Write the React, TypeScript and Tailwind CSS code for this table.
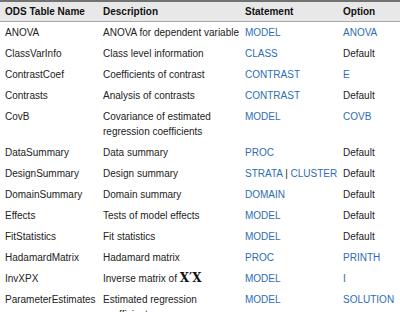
import React from "react";

type Row = { name: string; desc: React.ReactNode; stmt: React.ReactNode; opt: string; optBlue: boolean };

const B = ({ children }: { children: React.ReactNode }) => (
  <span className="text-[#2d6db5]">{children}</span>
);

const rows: Row[] = [
  { name: "ANOVA", desc: "ANOVA for dependent variable", stmt: <B>MODEL</B>, opt: "ANOVA", optBlue: true },
  { name: "ClassVarInfo", desc: "Class level information", stmt: <B>CLASS</B>, opt: "Default", optBlue: false },
  { name: "ContrastCoef", desc: "Coefficients of contrast", stmt: <B>CONTRAST</B>, opt: "E", optBlue: true },
  { name: "Contrasts", desc: "Analysis of contrasts", stmt: <B>CONTRAST</B>, opt: "Default", optBlue: false },
  {
    name: "CovB",
    desc: (
      <>
        Covariance of estimated
        <br />
        regression coefficients
      </>
    ),
    stmt: <B>MODEL</B>,
    opt: "COVB",
    optBlue: true,
  },
  { name: "DataSummary", desc: "Data summary", stmt: <B>PROC</B>, opt: "Default", optBlue: false },
  {
    name: "DesignSummary",
    desc: "Design summary",
    stmt: (
      <>
        <B>STRATA</B> | <B>CLUSTER</B>
      </>
    ),
    opt: "Default",
    optBlue: false,
  },
  { name: "DomainSummary", desc: "Domain summary", stmt: <B>DOMAIN</B>, opt: "Default", optBlue: false },
  { name: "Effects", desc: "Tests of model effects", stmt: <B>MODEL</B>, opt: "Default", optBlue: false },
  { name: "FitStatistics", desc: "Fit statistics", stmt: <B>MODEL</B>, opt: "Default", optBlue: false },
  { name: "HadamardMatrix", desc: "Hadamard matrix", stmt: <B>PROC</B>, opt: "PRINTH", optBlue: true },
  {
    name: "InvXPX",
    desc: (
      <>
        Inverse matrix of{" "}
        <span className="font-bold text-[12px] leading-[15px] text-[#111] [font-family:'DejaVu_Serif',serif]">X′X</span>
      </>
    ),
    stmt: <B>MODEL</B>,
    opt: "I",
    optBlue: true,
  },
  {
    name: "ParameterEstimates",
    desc: (
      <>
        Estimated regression
        <br />
        coefficients
      </>
    ),
    stmt: <B>MODEL</B>,
    opt: "SOLUTION",
    optBlue: true,
  },
];

export default function App() {
  return (
    <div className="w-[400px] h-[312px] overflow-hidden bg-white text-[#222] text-[10px] leading-[15px] [font-family:'Liberation_Sans',Arial,sans-serif]">
      <div className="grid grid-cols-[98px_142px_98px_1fr] bg-[#e8e8e8] border-t-2 border-b border-t-[#727272] border-b-[#a8a8a8] font-bold text-[#111]">
        <div className="pl-[5px] py-[2px] whitespace-nowrap">ODS Table Name</div>
        <div className="pl-[5px] py-[2px]">Description</div>
        <div className="pl-[5px] py-[2px]">Statement</div>
        <div className="pl-[5px] py-[2px]">Option</div>
      </div>
      {rows.map((r) => (
        <div key={r.name} className="grid grid-cols-[98px_142px_98px_1fr]">
          <div className="pl-[5px] py-[3px] whitespace-nowrap">{r.name}</div>
          <div className="pl-[5px] py-[3px] whitespace-nowrap">{r.desc}</div>
          <div className="pl-[5px] py-[3px] whitespace-nowrap">{r.stmt}</div>
          <div className={"pl-[5px] py-[3px] whitespace-nowrap " + (r.optBlue ? "text-[#2d6db5]" : "")}>{r.opt}</div>
        </div>
      ))}
    </div>
  );
}
